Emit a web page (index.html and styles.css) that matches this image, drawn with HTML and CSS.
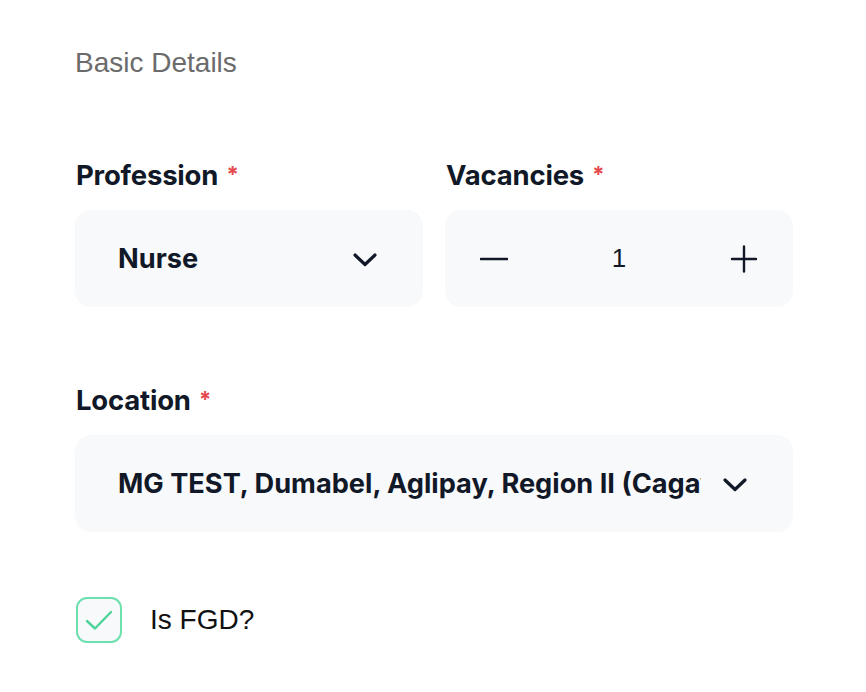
FILE: index.html
```html
<!DOCTYPE html>
<html lang="en">
<head>
<meta charset="utf-8">
<title>Basic Details</title>
<link rel="stylesheet" href="styles.css">
</head>
<body>
<main class="page">
  <h2 class="section-title">Basic Details</h2>

  <div class="row">
    <div class="field">
      <label class="label">Profession <span class="req">*</span></label>
      <div class="control select">
        <span class="value">Nurse</span>
        <svg class="chev" width="24" height="14" viewBox="0 0 24 14" aria-hidden="true"><path d="M2 2 L12 11.5 L22 2" fill="none" stroke="currentColor" stroke-width="3.2" stroke-linecap="round" stroke-linejoin="round"/></svg>
      </div>
    </div>
    <div class="field">
      <label class="label">Vacancies <span class="req">*</span></label>
      <div class="control stepper">
        <svg class="step-btn" width="28" height="28" viewBox="0 0 28 28" aria-hidden="true"><path d="M1 14 H27" stroke="currentColor" stroke-width="2.6" stroke-linecap="round"/></svg>
        <span class="count">1</span>
        <svg class="step-btn" width="28" height="28" viewBox="0 0 28 28" aria-hidden="true"><path d="M2 14 H26 M14 1.5 V26.5" stroke="currentColor" stroke-width="2.4" stroke-linecap="round"/></svg>
      </div>
    </div>
  </div>

  <div class="field location">
    <label class="label">Location <span class="req">*</span></label>
    <div class="control select">
      <span class="value clip">MG TEST, Dumabel, Aglipay, Region II (Cagayan Valley)</span>
      <svg class="chev" width="24" height="14" viewBox="0 0 24 14" aria-hidden="true"><path d="M2 2 L12 11.5 L22 2" fill="none" stroke="currentColor" stroke-width="3.2" stroke-linecap="round" stroke-linejoin="round"/></svg>
    </div>
  </div>

  <label class="check">
    <span class="box">
      <svg width="28" height="22" viewBox="0 0 28 22" aria-hidden="true"><path d="M2 12 L10 19.5 L26 3" fill="none" stroke="currentColor" stroke-width="2.4" stroke-linecap="round" stroke-linejoin="round"/></svg>
    </span>
    <span class="check-text">Is FGD?</span>
  </label>
</main>
</body>
</html>
```

FILE: styles.css
```css
* { box-sizing: border-box; }

html, body {
  margin: 0;
  padding: 0;
  background: #ffffff;
}

.page {
  width: 793px;
  padding: 46px 0 0 75px;
  font-family: "Inter", "Liberation Sans", sans-serif;
  color: #111827;
}

.section-title {
  margin: 0;
  font-family: "Liberation Sans", Arial, sans-serif;
  font-weight: 400;
  font-size: 28px;
  line-height: 34px;
  color: #6b6b6b;
}

.row {
  display: grid;
  grid-template-columns: 1fr 1fr;
  gap: 22px;
  margin-top: 77px;
}

.field {
  display: flex;
  flex-direction: column;
  gap: 18px;
}

.location {
  margin-top: 75px;
}

.label {
  font-size: 27.5px;
  font-weight: 700;
  line-height: 34px;
  padding-left: 1px;
  letter-spacing: -0.2px;
}

.req {
  color: #e5484d;
  font-size: 22px;
  vertical-align: 3px;
  margin-left: 2px;
}

.control {
  height: 97px;
  border-radius: 16px;
  background: #f8f9fb;
  display: flex;
  align-items: center;
}

.select {
  padding: 0 46px 0 43px;
  gap: 22px;
}

.value {
  flex: 1;
  min-width: 0;
  font-size: 27.2px;
  font-weight: 700;
  letter-spacing: 0;
  white-space: nowrap;
}

.clip {
  overflow: hidden;
}

.chev {
  flex: none;
  color: #111827;
  margin-top: 2px;
}

.stepper {
  padding: 0 35px;
  justify-content: space-between;
}

.step-btn {
  color: #111827;
}

.count {
  font-size: 26px;
  font-weight: 400;
  font-family: "Liberation Sans", sans-serif;
}

.check {
  display: flex;
  align-items: center;
  gap: 28px;
  margin-top: 65px;
  padding-left: 1px;
}

.box {
  width: 46px;
  height: 46px;
  border: 2.5px solid #6ee0ad;
  border-radius: 11px;
  background: #f8f9fb;
  color: #4fd39a;
  display: flex;
  align-items: center;
  justify-content: center;
}

.check-text {
  font-family: "Liberation Sans", Arial, sans-serif;
  font-size: 28px;
  color: #111111;
}
```
